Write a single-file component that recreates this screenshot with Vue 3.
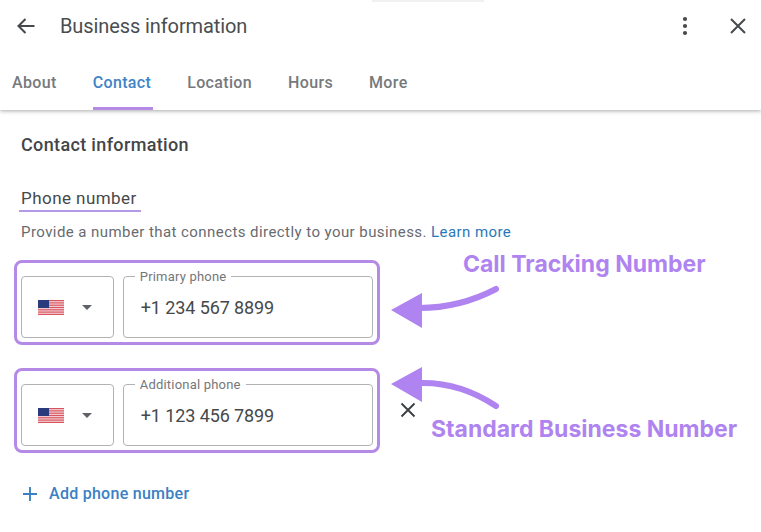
<template>
  <div class="page">
    <div class="notch"></div>
    <header class="header">
      <div class="title-row">
        <svg class="back" width="20" height="18" viewBox="0 0 20 18">
          <path d="M18.5 9H2.5M9.5 2 2.5 9l7 7" fill="none" stroke="#474a4d" stroke-width="2.1" />
        </svg>
        <h1 class="title">Business information</h1>
        <svg class="dots" width="6" height="20" viewBox="0 0 6 20">
          <circle cx="3" cy="3" r="2.1" fill="#474a4d" />
          <circle cx="3" cy="10" r="2.1" fill="#474a4d" />
          <circle cx="3" cy="17" r="2.1" fill="#474a4d" />
        </svg>
        <svg class="close" width="16" height="16" viewBox="0 0 16 16">
          <path d="M1 1l14 14M15 1 1 15" fill="none" stroke="#474a4d" stroke-width="2" />
        </svg>
      </div>
      <nav class="tabs">
        <a v-for="tab in tabs" :key="tab" class="tab" :class="{ active: tab === 'Contact' }">{{ tab }}</a>
      </nav>
    </header>

    <main class="content">
      <h2 class="section">Contact information</h2>
      <h3 class="label">Phone number</h3>
      <p class="hint">Provide a number that connects directly to your business. <a class="link">Learn more</a></p>

      <div v-for="phone in phones" :key="phone.label" class="phone-row">
        <div class="highlight">
          <div class="country">
            <svg class="flag" width="26" height="15" viewBox="0 0 26 15">
              <rect width="26" height="15" fill="#f3d9dc" />
              <rect y="0" width="26" height="1.2" fill="#d9545f" />
              <rect y="2.3" width="26" height="1.2" fill="#d9545f" />
              <rect y="4.6" width="26" height="1.2" fill="#d9545f" />
              <rect y="6.9" width="26" height="1.2" fill="#d9545f" />
              <rect y="9.2" width="26" height="1.2" fill="#d9545f" />
              <rect y="11.5" width="26" height="1.2" fill="#d9545f" />
              <rect y="13.8" width="26" height="1.2" fill="#d9545f" />
              <rect width="11" height="8" fill="#2a3b7d" />
            </svg>
            <span class="caret"></span>
          </div>
          <div class="field">
            <span class="field-label">{{ phone.label }}</span>
            <span class="field-value">{{ phone.value }}</span>
          </div>
        </div>
        <svg v-if="phone.removable" class="remove" width="16" height="16" viewBox="0 0 16 16">
          <path d="M1.5 1.5l13 13M14.5 1.5l-13 13" fill="none" stroke="#3c4043" stroke-width="1.9" />
        </svg>
      </div>

      <a class="add">
        <svg width="16" height="16" viewBox="0 0 16 16">
          <path d="M8 1v14M1 8h14" fill="none" stroke="#3b80c4" stroke-width="1.9" />
        </svg>
        <span>Add phone number</span>
      </a>
    </main>

    <span class="note note-top">Call Tracking Number</span>
    <span class="note note-bottom">Standard Business Number</span>
    <svg class="arrows" width="120" height="130" viewBox="0 0 120 130">
      <path d="M28 26C60 26 84 18 105 7" fill="none" stroke="#b084f0" stroke-width="6" stroke-linecap="round" />
      <path d="M0 28 31 11V46Z" fill="#b084f0" />
      <path d="M28 101C60 100 84 110 105 124" fill="none" stroke="#b084f0" stroke-width="6" stroke-linecap="round" />
      <path d="M0 102 31 85V120Z" fill="#b084f0" />
    </svg>
  </div>
</template>

<script setup>
const tabs = ['About', 'Contact', 'Location', 'Hours', 'More']

const phones = [
  { label: 'Primary phone', value: '+1 234 567 8899', removable: false },
  { label: 'Additional phone', value: '+1 123 456 7899', removable: true },
]
</script>

<style>
html,
body {
  margin: 0;
  background: #fff;
}
</style>

<style scoped>
.page {
  position: relative;
  width: 761px;
  height: 532px;
  overflow: hidden;
  background: #fff;
  font-family: Roboto, "Liberation Sans", sans-serif;
  color: #3c4043;
}

.notch {
  position: absolute;
  top: 0;
  left: 372px;
  width: 112px;
  height: 2px;
  background: #f1f1f1;
  z-index: 2;
}

.header {
  height: 110px;
  box-shadow: 0 1px 4px rgba(60, 64, 67, 0.45);
}

.title-row {
  display: flex;
  align-items: center;
  height: 52px;
  padding: 0 15px 0 16px;
}

.back {
  margin-right: 24px;
}

.title {
  flex: 1;
  margin: 0;
  font-size: 20px;
  font-weight: 400;
  letter-spacing: -0.1px;
  color: #4a4d50;
}

.dots {
  margin-right: 42px;
}

.tabs {
  display: flex;
  gap: 36px;
  height: 58px;
  padding-left: 12px;
}

.tab {
  display: flex;
  align-items: center;
  box-sizing: border-box;
  height: 58px;
  padding-top: 2px;
  font-size: 16px;
  font-weight: 500;
  letter-spacing: 0.35px;
  color: #76797c;
}

.tab.active {
  color: #3f84c8;
  border-bottom: 3px solid #b48ae6;
  padding-top: 5px;
  padding-right: 2px;
  margin-right: -2px;
}

.content {
  padding: 24px 0 0 14px;
}

.section {
  margin: 0 0 0 7px;
  height: 22px;
  line-height: 22px;
  font-size: 18px;
  font-weight: 500;
  letter-spacing: 0.35px;
  color: #434548;
}

.label {
  width: fit-content;
  margin: 31px 0 0 5px;
  padding: 0 4px 0 2px;
  height: 23px;
  line-height: 22px;
  border-bottom: 2px solid #b49ae6;
  font-size: 17px;
  font-weight: 400;
  letter-spacing: 0.45px;
  color: #45484b;
}

.hint {
  margin: 9px 0 0 7px;
  height: 22px;
  line-height: 22px;
  font-size: 15px;
  letter-spacing: 0.43px;
  color: #686b6f;
  white-space: nowrap;
}

.link {
  color: #2a78b8;
}

.phone-row {
  display: flex;
  align-items: center;
  margin-top: 17px;
}

.phone-row + .phone-row {
  margin-top: 23px;
}

.highlight {
  display: flex;
  gap: 9px;
  box-sizing: border-box;
  width: 366px;
  height: 85px;
  padding: 13px 4px 0;
  border: 3px solid #b48ae6;
  border-radius: 8px;
}

.country {
  display: flex;
  align-items: center;
  box-sizing: border-box;
  width: 93px;
  height: 62px;
  padding-left: 16px;
  border: 1px solid #b0b2b4;
  border-radius: 4px;
}

.flag {
  margin-right: 18px;
}

.caret {
  width: 0;
  height: 0;
  border-left: 5.5px solid transparent;
  border-right: 5.5px solid transparent;
  border-top: 5.5px solid #5f6368;
}

.field {
  position: relative;
  display: flex;
  align-items: center;
  box-sizing: border-box;
  width: 251px;
  height: 62px;
  padding-left: 17px;
  border: 1px solid #b0b2b4;
  border-radius: 4px;
}

.field-label {
  position: absolute;
  top: -8px;
  left: 11px;
  padding: 0 5px;
  background: #fff;
  font-size: 13px;
  line-height: 15px;
  letter-spacing: 0.2px;
  color: #74777a;
}

.field-value {
  font-size: 18px;
  letter-spacing: -0.1px;
  color: #46494c;
}

.remove {
  margin-left: 20px;
  margin-top: -1px;
}

.add {
  display: flex;
  align-items: center;
  gap: 11px;
  margin: 31px 0 0 8px;
  font-size: 16px;
  font-weight: 500;
  letter-spacing: 0.27px;
  color: #3b80c4;
}

.note {
  position: absolute;
  font-family: Inter, "Liberation Sans", sans-serif;
  font-size: 23px;
  line-height: 28px;
  font-weight: 700;
  color: #b084f0;
  white-space: nowrap;
}

.note-top {
  top: 250px;
  left: 463px;
}

.note-bottom {
  top: 415px;
  left: 431px;
}

.arrows {
  position: absolute;
  top: 282px;
  left: 391px;
}
</style>
